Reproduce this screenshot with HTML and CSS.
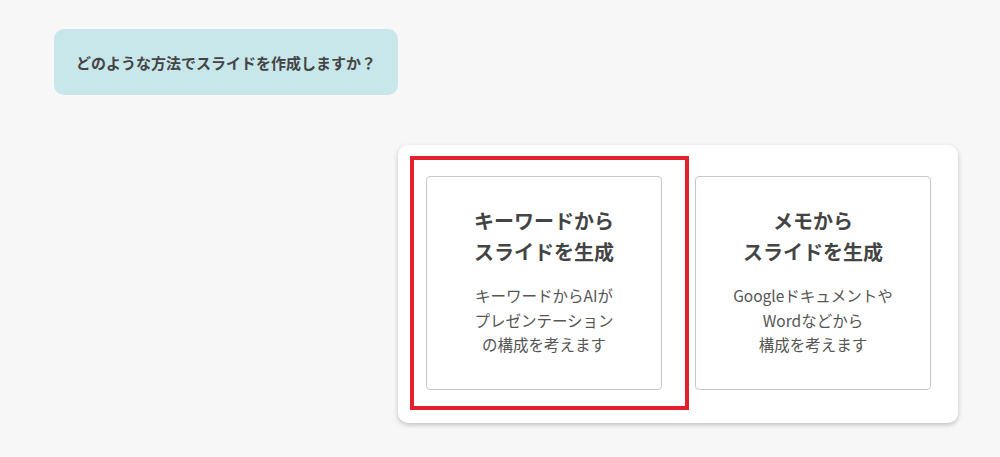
FILE: index.html
```html
<!DOCTYPE html>
<html lang="ja">
<head>
<meta charset="utf-8">
<link rel="stylesheet" href="styles.css">
</head>
<body>
<div class="page">
  <div class="bubble">どのような方法でスライドを作成しますか？</div>
  <div class="panel">
    <div class="card-wrap">
      <div class="card">
        <div class="card-title">キーワードから<br>スライドを生成</div>
        <div class="card-desc">キーワードからAIが<br>プレゼンテーション<br>の構成を考えます</div>
      </div>
      <div class="highlight"></div>
    </div>
    <div class="card-wrap">
      <div class="card">
        <div class="card-title">メモから<br>スライドを生成</div>
        <div class="card-desc">Googleドキュメントや<br>Wordなどから<br>構成を考えます</div>
      </div>
    </div>
  </div>
</div>
</body>
</html>
```

FILE: styles.css
```css
html, body {
  margin: 0;
  padding: 0;
  background: #f7f7f7;
  font-family: "Noto Sans CJK JP", "Noto Sans", sans-serif;
  color: #444;
}
.page {
  width: 1000px;
  height: 457px;
  padding: 29px 0 0 54px;
  box-sizing: border-box;
  display: flex;
  flex-direction: column;
  align-items: flex-start;
}
.bubble {
  width: 344px;
  height: 66px;
  box-sizing: border-box;
  background: #c8e7ea;
  border-radius: 10px;
  display: flex;
  align-items: center;
  justify-content: center;
  font-size: 15px;
  font-weight: 700;
  color: #444;
}
.panel {
  margin: 50px 0 0 344px;
  width: 560px;
  height: 278px;
  box-sizing: border-box;
  background: #fff;
  border-radius: 10px;
  box-shadow: 0 2px 5px rgba(0, 0, 0, 0.22);
  padding: 31px 27px 0 28px;
  display: flex;
  gap: 33px;
}
.card-wrap {
  position: relative;
}
.card {
  width: 236px;
  height: 214px;
  box-sizing: border-box;
  border: 1px solid #c8c8c8;
  border-radius: 4px;
  background: #fff;
  display: flex;
  flex-direction: column;
  align-items: center;
  text-align: center;
  padding-top: 28px;
}
.card-title {
  font-size: 20px;
  font-weight: 700;
  line-height: 31px;
  color: #444;
}
.card-desc {
  margin-top: 16px;
  font-size: 15.5px;
  line-height: 24.5px;
  color: #555;
}
.highlight {
  position: absolute;
  left: -16px;
  top: -20px;
  width: 279px;
  height: 254px;
  box-sizing: border-box;
  border: 4px solid #e3202b;
  pointer-events: none;
}
```
